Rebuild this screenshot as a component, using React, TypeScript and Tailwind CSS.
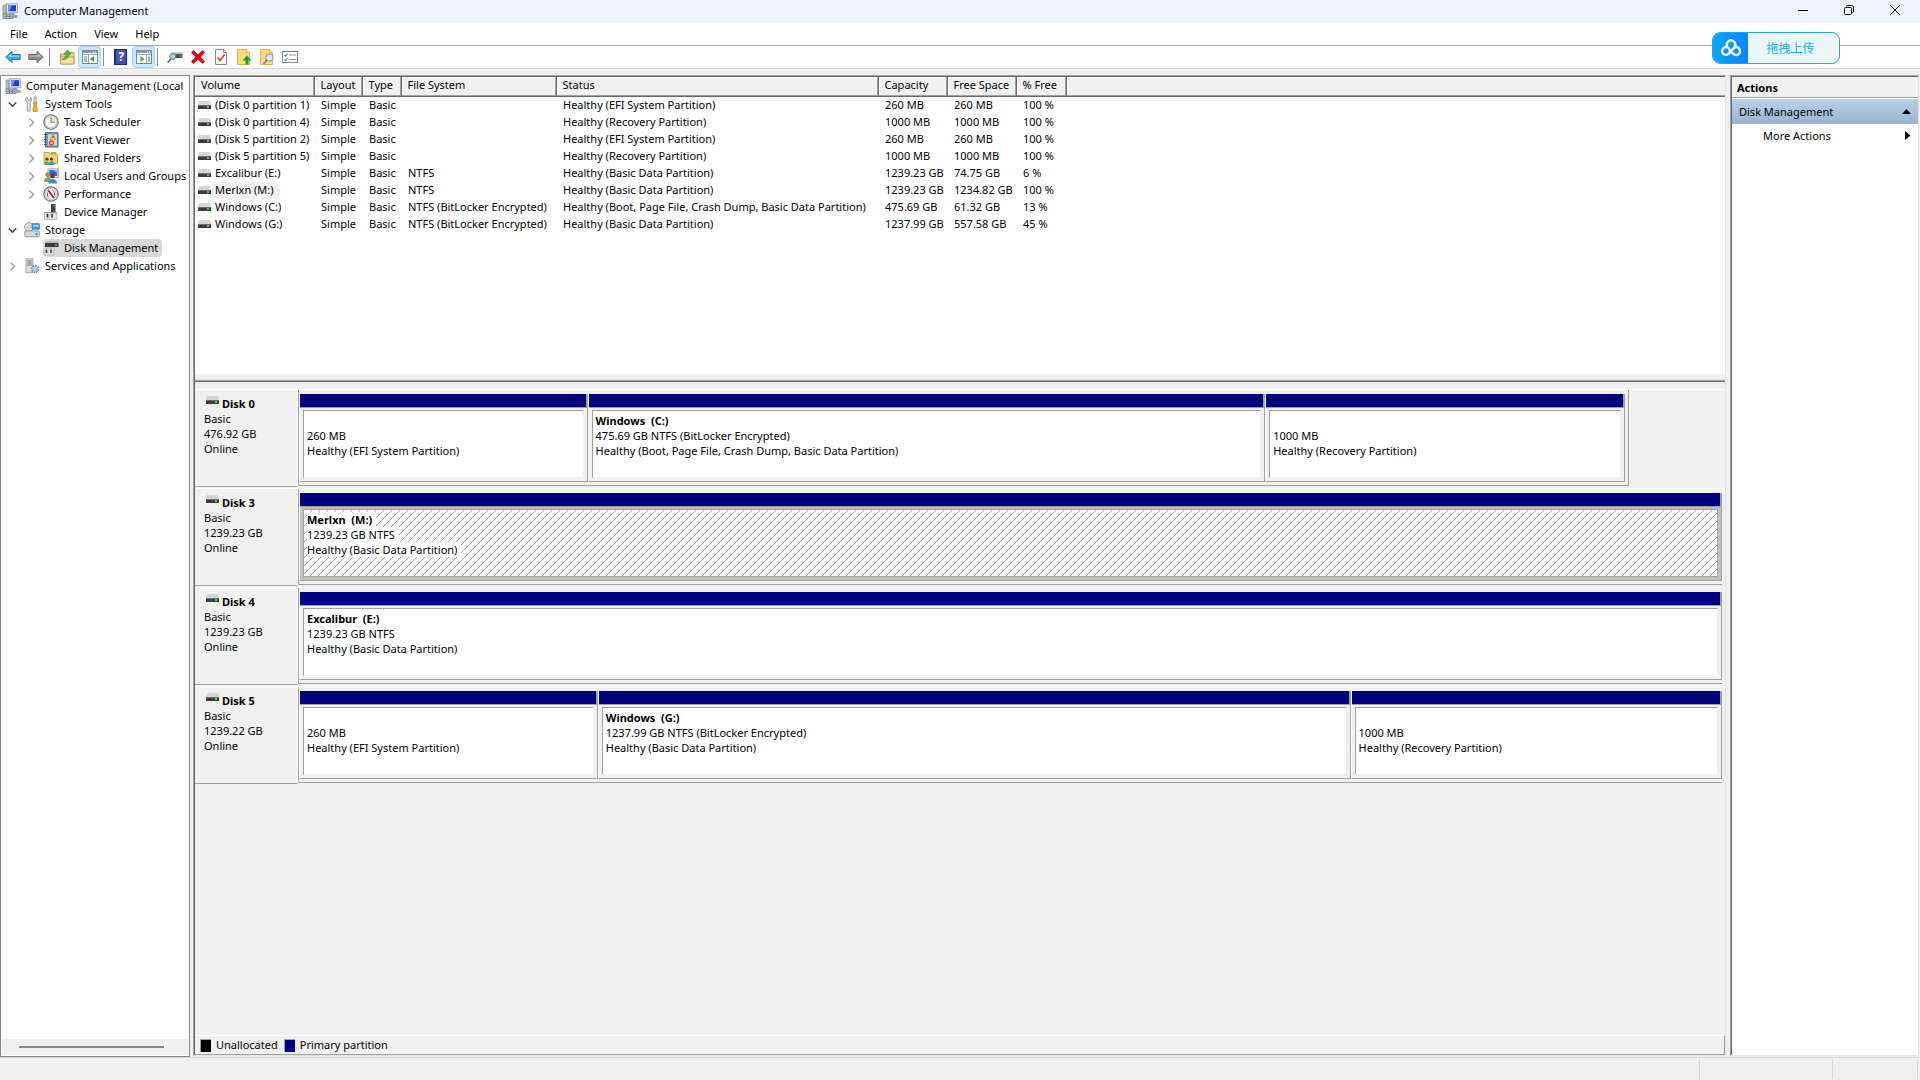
import type { ReactNode } from "react";

interface Volume {
  name: string;
  fileSystem: string;
  status: string;
  capacity: string;
  free: string;
  percent: string;
  selected?: boolean;
}

interface Partition {
  title?: string;
  size: string;
  status: string;
  weight: number;
  selected?: boolean;
}

interface Disk {
  name: string;
  size: string;
  // share of the row that the disk takes, in percent
  span: number;
  partitions: Partition[];
}

const volumes: Volume[] = [
  { name: "(Disk 0 partition 1)", fileSystem: "", status: "Healthy (EFI System Partition)", capacity: "260 MB", free: "260 MB", percent: "100 %" },
  { name: "(Disk 0 partition 4)", fileSystem: "", status: "Healthy (Recovery Partition)", capacity: "1000 MB", free: "1000 MB", percent: "100 %" },
  { name: "(Disk 5 partition 2)", fileSystem: "", status: "Healthy (EFI System Partition)", capacity: "260 MB", free: "260 MB", percent: "100 %" },
  { name: "(Disk 5 partition 5)", fileSystem: "", status: "Healthy (Recovery Partition)", capacity: "1000 MB", free: "1000 MB", percent: "100 %" },
  { name: "Excalibur (E:)", fileSystem: "NTFS", status: "Healthy (Basic Data Partition)", capacity: "1239.23 GB", free: "74.75 GB", percent: "6 %" },
  { name: "Merlxn (M:)", fileSystem: "NTFS", status: "Healthy (Basic Data Partition)", capacity: "1239.23 GB", free: "1234.82 GB", percent: "100 %", selected: true },
  { name: "Windows (C:)", fileSystem: "NTFS (BitLocker Encrypted)", status: "Healthy (Boot, Page File, Crash Dump, Basic Data Partition)", capacity: "475.69 GB", free: "61.32 GB", percent: "13 %" },
  { name: "Windows (G:)", fileSystem: "NTFS (BitLocker Encrypted)", status: "Healthy (Basic Data Partition)", capacity: "1237.99 GB", free: "557.58 GB", percent: "45 %" },
];

const disks: Disk[] = [
  {
    name: "Disk 0",
    size: "476.92 GB",
    span: 93.5,
    partitions: [
      { size: "260 MB", status: "Healthy (EFI System Partition)", weight: 288 },
      { title: "Windows  (C:)", size: "475.69 GB NTFS (BitLocker Encrypted)", status: "Healthy (Boot, Page File, Crash Dump, Basic Data Partition)", weight: 679 },
      { size: "1000 MB", status: "Healthy (Recovery Partition)", weight: 360 },
    ],
  },
  {
    name: "Disk 3",
    size: "1239.23 GB",
    span: 100,
    partitions: [{ title: "Merlxn  (M:)", size: "1239.23 GB NTFS", status: "Healthy (Basic Data Partition)", weight: 1, selected: true }],
  },
  {
    name: "Disk 4",
    size: "1239.23 GB",
    span: 100,
    partitions: [{ title: "Excalibur  (E:)", size: "1239.23 GB NTFS", status: "Healthy (Basic Data Partition)", weight: 1 }],
  },
  {
    name: "Disk 5",
    size: "1239.22 GB",
    span: 100,
    partitions: [
      { size: "260 MB", status: "Healthy (EFI System Partition)", weight: 298 },
      { title: "Windows  (G:)", size: "1237.99 GB NTFS (BitLocker Encrypted)", status: "Healthy (Basic Data Partition)", weight: 754 },
      { size: "1000 MB", status: "Healthy (Recovery Partition)", weight: 371 },
    ],
  },
];

/* ---------- icons ---------- */

function Svg({ children, size = 16 }: { children: ReactNode; size?: number }) {
  return (
    <svg width={size} height={size} viewBox="0 0 16 16" className="shrink-0" fill="none" aria-hidden="true">
      {children}
    </svg>
  );
}

function ComputerIcon() {
  return (
    <Svg>
      <path d="M1 2h3v9H1z" fill="#b9bfc6" stroke="#6f7a86" strokeWidth=".6" />
      <rect x="4.5" y=".8" width="11" height="9" fill="#e3e6ea" stroke="#8a929c" strokeWidth=".7" />
      <rect x="6" y="2.2" width="8" height="6" fill="#1c3fd0" />
      <path d="M6 2.2h4l-2.5 6H6z" fill="#6f93f2" />
      <path d="M8 10h4l1 2H7z" fill="#a9b0b8" />
      <path d="M1 11h10v4.5H1z" fill="#c5cad0" stroke="#5e6873" strokeWidth=".7" />
      <path d="M2 13.3h8M4.5 11.5v3.6M7.5 11.5v3.6" stroke="#5e6873" strokeWidth=".8" />
      <path d="M11 12h4.5v3H11z" fill="#9aa3ad" />
    </Svg>
  );
}

function ToolsIcon() {
  return (
    <Svg>
      <path d="M3 1.2C1.6 2 1.2 3.8 2 5.1l1.2 1v9h3v-9c1.5-.9 1.9-3.3.4-4.900v3H5L3.800 4z" fill="#dfe2e5" stroke="#7b8086" strokeWidth=".7" />
      <path d="M10 1h2.200v6H10z" fill="#d5d8dc" stroke="#7b8086" strokeWidth=".6" />
      <path d="M9 7h4.200l-.8 1.500v2.500l.8 1v3.500H9V12l.8-1V8.500z" fill="#f3b41b" stroke="#a8770b" strokeWidth=".6" />
    </Svg>
  );
}

function ClockIcon() {
  return (
    <Svg>
      <circle cx="8" cy="8" r="7.2" fill="#d3d6da" stroke="#73777c" strokeWidth="1.1" />
      <circle cx="8" cy="8" r="5.5" fill="#fdfdfb" stroke="#b3b7bc" strokeWidth=".6" />
      <path d="M8 8V2.500A5.500 5.500 0 0 1 13.500 8z" fill="#fbe3b4" />
      <path d="M8 3.500V8.300H12" stroke="#5a7fa8" strokeWidth="1.1" />
    </Svg>
  );
}

function EventIcon() {
  return (
    <Svg>
      <rect x="2.5" y=".8" width="12.5" height="14.2" fill="#7c9cc4" stroke="#43566e" strokeWidth=".9" />
      <rect x="5" y="2.2" width="9" height="11.5" fill="#c4d8ee" />
      <path d="M1 2.500h3M1 5h3M1 7.500h3M1 10h3M1 12.500h3" stroke="#4a5665" strokeWidth="1" />
      <path d="M10 2l3.200 5.500H6.800z" fill="#fbc62a" stroke="#a97a0a" strokeWidth=".5" />
      <path d="M10 4v2" stroke="#222" strokeWidth=".9" />
      <circle cx="8.500" cy="11" r="2.700" fill="#d9472f" />
      <path d="M7.400 9.900l2.200 2.200M9.600 9.900l-2.200 2.200" stroke="#fff" strokeWidth=".8" />
    </Svg>
  );
}

function SharedIcon() {
  return (
    <Svg>
      <path d="M1 2.500h5l1 1.500h7.500v9.500H1z" fill="#f6d375" stroke="#b98d2c" strokeWidth=".8" />
      <path d="M8 2h5v2H8z" fill="#7fc46e" />
      <circle cx="4" cy="9" r="1.600" fill="#4b3a28" />
      <circle cx="8.500" cy="9" r="1.600" fill="#4b3a28" />
      <path d="M1.300 15c0-5 5.400-5 5.400 0z" fill="#4fa978" />
      <path d="M6 15c0-5 5.400-5 5.400 0z" fill="#3b9cc0" />
    </Svg>
  );
}

function UsersIcon() {
  return (
    <Svg>
      <rect x="5" y=".8" width="10.500" height="8.700" fill="#dfe3e8" stroke="#8a929c" strokeWidth=".7" />
      <rect x="6.300" y="2" width="8" height="6" fill="#3562d8" />
      <path d="M10 2h4.300v3z" fill="#8fb0f5" />
      <circle cx="4.800" cy="6.500" r="2.500" fill="#b98a52" />
      <path d="M.8 14c0-6.500 8-6.500 8 0z" fill="#6fae53" />
      <circle cx="9.500" cy="8" r="2.400" fill="#5b4330" />
      <path d="M5.500 15.500c0-6 8.500-6 8.500 0z" fill="#4b83cc" />
    </Svg>
  );
}

function PerformanceIcon() {
  return (
    <Svg>
      <circle cx="8" cy="8" r="7.200" fill="#e6e8ea" stroke="#6d7176" strokeWidth="1.200" />
      <circle cx="8" cy="8" r="5.300" fill="#fff" stroke="#a9acb0" strokeWidth=".7" />
      <path d="M5 4l6 8" stroke="#d3141c" strokeWidth="1.900" />
      <path d="M9.500 4l2 2.500v3M4.500 6.500V10l1.500 1.500" stroke="#c8343a" strokeWidth=".9" />
    </Svg>
  );
}

function DeviceIcon() {
  return (
    <Svg>
      <rect x="8" y="0" width="4.500" height="8" fill="#3b3f44" />
      <rect x="10" y="1.200" width="1.300" height="1.300" fill="#3bd13b" />
      <path d="M1.500 8h12.500v1.500H1.500z" fill="#8f9397" />
      <path d="M1.500 9h12.500v6.500H1.500z" fill="#e1e2e4" stroke="#9a9da1" strokeWidth=".6" />
      <path d="M4.500 10v3.500M9 10v3.500" stroke="#333" strokeWidth="1.600" />
    </Svg>
  );
}

function StorageIcon() {
  return (
    <Svg>
      <circle cx="5" cy="5" r="4.500" fill="#d5dade" stroke="#8a9096" strokeWidth=".7" />
      <circle cx="5" cy="5" r="1.300" fill="#fff" stroke="#8a9096" strokeWidth=".5" />
      <rect x="8" y="1.500" width="7.500" height="6" rx=".8" fill="#3f9fdc" stroke="#1f6ba0" strokeWidth=".6" />
      <path d="M9 3h5.500v1.500H9z" fill="#b5e0f8" />
      <rect x=".8" y="9" width="14.500" height="5.800" rx="1" fill="#d7dadd" stroke="#7c8288" strokeWidth=".8" />
      <rect x="11.500" y="11" width="2" height="2.200" fill="#2fb52f" />
    </Svg>
  );
}

function DiskManagementIcon() {
  return (
    <Svg>
      <path d="M2 3l2-2h11l.5 2z" fill="#b7babd" />
      <path d="M2 3h13.500v4H2z" fill="#3a3d41" />
      <rect x="12" y="4.300" width="2" height="1.300" fill="#3bd13b" />
      <path d="M1 8h10v7H1z" fill="#e1e2e4" stroke="#9a9da1" strokeWidth=".6" />
      <path d="M3.500 9.500v3.500M8 9.500v3.500" stroke="#333" strokeWidth="1.500" />
    </Svg>
  );
}

function ServicesIcon() {
  return (
    <Svg>
      <path d="M2 .8h7v14H2z" fill="#dde0e3" stroke="#80868c" strokeWidth=".7" />
      <path d="M3.200 3h4.600M3.200 5h4.600M3.200 7h4.600" stroke="#5d6369" strokeWidth=".9" />
      <circle cx="11" cy="11" r="3.300" fill="#c7dcee" stroke="#5d86ab" strokeWidth="1.700" strokeDasharray="1.600 .9" />
      <circle cx="11" cy="11" r="1.300" fill="#fff" stroke="#5d86ab" strokeWidth=".6" />
    </Svg>
  );
}

function DriveIcon() {
  return (
    <svg width="13" height="8" viewBox="0 0 13 8" className="shrink-0" aria-hidden="true">
      <path d="M1 0h11l1 4H0z" fill="#d3d6d9" />
      <rect y="4" width="13" height="4" fill="#3a3d40" />
      <rect y="4" width="13" height="1" fill="#6b6f73" />
      <rect x="9" y="5" width="2" height="2" fill="#35e035" />
    </svg>
  );
}

function BackIcon() {
  return (
    <Svg>
      <path d="M.8 8L7 2.300v3.200h8.200v5H7v3.200z" fill="#35a8ec" stroke="#1c6cae" strokeWidth=".9" strokeLinejoin="round" />
      <path d="M2.500 7.700L6.300 4.200v2.300h8v1.200z" fill="#93d6fa" />
    </Svg>
  );
}

function ForwardIcon() {
  return (
    <Svg>
      <path d="M15.200 8L9 2.300v3.200H.8v5H9v3.200z" fill="#8c8f92" stroke="#5d6063" strokeWidth=".9" strokeLinejoin="round" />
      <path d="M13.500 7.700L9.700 4.200v2.300h-8v1.200z" fill="#b9bbbd" />
    </Svg>
  );
}

function UpFolderIcon() {
  return (
    <Svg>
      <path d="M1.500 5h6l1-1.500h6.500V15H1.500z" fill="#f0cd7c" stroke="#ab8536" strokeWidth=".8" />
      <path d="M1.500 8h13.500v7H1.500z" fill="#f7dea0" stroke="#ab8536" strokeWidth=".6" />
      <path d="M3 10.500c3-1 4-3 4-5.500H5L8.500.8 12 5H9.800c0 4-2.700 6-6.800 5.500z" fill="#4fc13a" stroke="#2b8420" strokeWidth=".6" />
    </Svg>
  );
}

function ConsoleIcon({ flip }: { flip?: boolean }) {
  return (
    <Svg>
      <rect x=".5" y="1.500" width="15" height="13" fill="#fff" stroke="#7f878f" />
      <path d="M1 2h14v2H1z" fill="#8e979f" />
      <path d="M11 3h1M13 3h1" stroke="#fff" />
      <path d="M1 5.500h14" stroke="#9aa2aa" />
      {flip ? (
        <>
          <path d="M10.500 6v8" stroke="#9aa2aa" />
          <path d="M12 8h2M12 10h2M12 12h2" stroke="#3f77b5" />
          <path d="M4.500 7l4 3-4 3z" fill="#3cae2c" />
        </>
      ) : (
        <>
          <path d="M6.500 6v8" stroke="#9aa2aa" />
          <path d="M2 8h3M2 10h3M2 12h3" stroke="#3f77b5" />
          <path d="M12 7l-4 3 4 3z" fill="#3cae2c" />
        </>
      )}
    </Svg>
  );
}

function HelpIcon() {
  return (
    <span className="flex h-4 w-[13px] items-center justify-center border border-l-2 border-[#1b2b72] bg-[#3c55c0] text-[12px] leading-4 font-bold text-white">
      ?
    </span>
  );
}

function ConnectIcon() {
  return (
    <Svg>
      <path d="M4 3h11.500v2H4z" fill="#c3c6c9" />
      <path d="M4 5h11.500v4H4z" fill="#4a4e52" />
      <rect x="12.500" y="6.200" width="2" height="1.600" fill="#35d035" />
      <circle cx="5.800" cy="7.500" r="3" fill="#b9cbd9" stroke="#63707b" strokeWidth=".9" />
      <path d="M3.800 10L.8 13.500" stroke="#5e6a75" strokeWidth="1.700" />
    </Svg>
  );
}

function DeleteIcon() {
  return (
    <Svg>
      <path d="M3.500 1L8 5.500 12.500 1 15 3.500 10.700 8l4.300 4.500-2.500 2.500L8 10.500 3.500 15 1 12.500 5.300 8 1 3.500z" fill="#dc0a14" />
    </Svg>
  );
}

function CheckPageIcon() {
  return (
    <Svg>
      <path d="M2.500.5h8L13.500 3.500v12h-11z" fill="#fff" stroke="#86898c" />
      <path d="M10.500.5v3h3" stroke="#86898c" />
      <path d="M4.500 8.500l2.500 3 4.500-6" stroke="#e8471c" strokeWidth="1.800" />
    </Svg>
  );
}

function UploadPageIcon() {
  return (
    <Svg>
      <path d="M1.500.5h9l3 3v12h-12z" fill="#fbdc7c" stroke="#dcb440" />
      <path d="M10.500.5v3h3" fill="#fff3cc" stroke="#dcb440" />
      <path d="M11 6.500l4.500 5H12.500v4h-3v-4H6.500z" fill="#1e9e28" />
    </Svg>
  );
}

function SearchPageIcon() {
  return (
    <Svg>
      <path d="M1.500.5h9l3 3v12h-12z" fill="#fbdc7c" stroke="#dcb440" />
      <path d="M10.500.5v3h3" fill="#fff3cc" stroke="#dcb440" />
      <circle cx="10.500" cy="8.500" r="3.500" fill="#dcecf7" stroke="#8496a5" strokeWidth="1.100" />
      <path d="M8 11.200L4.500 15" stroke="#7a8a97" strokeWidth="1.700" />
    </Svg>
  );
}

function ListIcon() {
  return (
    <Svg>
      <rect x=".5" y="2.500" width="15" height="11" fill="#fff" stroke="#7f878f" />
      <path d="M0 2.500h16" stroke="#6d757d" />
      <path d="M2.500 6l1 1.200L5.500 4.500M2.500 10.500l1 1.200L5.500 9" stroke="#2b82c9" strokeWidth="1.100" />
      <path d="M7 6h7M7 10.500h7" stroke="#8e979f" />
    </Svg>
  );
}

function CloudIcon() {
  return (
    <svg width="22" height="18" viewBox="0 0 22 18" fill="none" stroke="#fff" strokeWidth="2.400" aria-hidden="true">
      <path d="M7.600 8.200a4.200 4.200 0 1 1 6.800 0" />
      <circle cx="6" cy="12" r="3.900" />
      <path d="M8.500 15l5-5.600a3.900 3.900 0 1 1 .2 5.800L11 12.300" />
    </svg>
  );
}

/* ---------- window chrome ---------- */

function TitleBar() {
  return (
    <header className="flex h-[23px] items-center bg-[#eff3fb] pr-[2px] pb-px pl-[2px]">
      <ComputerIcon />
      <h1 className="ml-[6px] flex-1 pb-px">Computer Management</h1>
      <button aria-label="Minimize" className="flex h-full w-[46px] items-center justify-center pb-[2px]">
        <svg width="10" height="10" stroke="#000"><path d="M0 5.500h10" /></svg>
      </button>
      <button aria-label="Restore" className="flex h-full w-[46px] items-center justify-center pb-[2px]">
        <svg width="10" height="10" fill="none" stroke="#000">
          <rect x=".5" y="2.500" width="7" height="7" rx="1" />
          <path d="M2.500 2V1.500a1 1 0 0 1 1-1h4a2 2 0 0 1 2 2v4a1 1 0 0 1-1 1H8" />
        </svg>
      </button>
      <button aria-label="Close" className="flex h-full w-[46px] items-center justify-center pb-[2px]">
        <svg width="10" height="10" stroke="#000"><path d="M0 0l10 10M10 0L0 10" /></svg>
      </button>
    </header>
  );
}

function MenuBar() {
  return (
    <nav className="flex h-[23px] items-center gap-px border-b border-[#a9a9b0] bg-white pb-[2px] pl-[2px]">
      {["File", "Action", "View", "Help"].map((item) => (
        <button key={item} className="px-2">{item}</button>
      ))}
    </nav>
  );
}

function ToolButton({ label, active, children }: { label: string; active?: boolean; children: ReactNode }) {
  return (
    <button
      aria-label={label}
      className={`flex h-[22px] w-[23px] items-center justify-center ${active ? "rounded-sm border border-[#99d1ff] bg-[#cce8ff]" : ""}`}
    >
      {children}
    </button>
  );
}

function ToolSeparator() {
  return <span className="mr-[5px] ml-[2px] h-[18px] w-px bg-[#8a8a8a]" />;
}

function ToolBar() {
  return (
    <div className="flex h-[23px] items-center border-b border-[#d7d7d7] bg-white pl-px">
      <ToolButton label="Back"><BackIcon /></ToolButton>
      <ToolButton label="Forward"><ForwardIcon /></ToolButton>
      <ToolSeparator />
      <ToolButton label="Up one level"><UpFolderIcon /></ToolButton>
      <ToolButton label="Show console tree" active><ConsoleIcon /></ToolButton>
      <ToolSeparator />
      <ToolButton label="Help topics"><HelpIcon /></ToolButton>
      <ToolButton label="Show action pane" active><ConsoleIcon flip /></ToolButton>
      <ToolSeparator />
      <ToolButton label="Rescan disks"><ConnectIcon /></ToolButton>
      <ToolButton label="Delete"><DeleteIcon /></ToolButton>
      <ToolButton label="Properties"><CheckPageIcon /></ToolButton>
      <ToolButton label="Open"><UploadPageIcon /></ToolButton>
      <ToolButton label="Explore"><SearchPageIcon /></ToolButton>
      <ToolButton label="Settings"><ListIcon /></ToolButton>
    </div>
  );
}

/* ---------- console tree ---------- */

const tree: { label: string; level: 0 | 1 | 2; state?: "open" | "closed"; icon: ReactNode; selected?: boolean }[] = [
  { label: "Computer Management (Local", level: 0, icon: <ComputerIcon /> },
  { label: "System Tools", level: 1, state: "open", icon: <ToolsIcon /> },
  { label: "Task Scheduler", level: 2, state: "closed", icon: <ClockIcon /> },
  { label: "Event Viewer", level: 2, state: "closed", icon: <EventIcon /> },
  { label: "Shared Folders", level: 2, state: "closed", icon: <SharedIcon /> },
  { label: "Local Users and Groups", level: 2, state: "closed", icon: <UsersIcon /> },
  { label: "Performance", level: 2, state: "closed", icon: <PerformanceIcon /> },
  { label: "Device Manager", level: 2, icon: <DeviceIcon /> },
  { label: "Storage", level: 1, state: "open", icon: <StorageIcon /> },
  { label: "Disk Management", level: 2, icon: <DiskManagementIcon />, selected: true },
  { label: "Services and Applications", level: 1, state: "closed", icon: <ServicesIcon /> },
];

const indents = ["pl-[3px]", "pl-[3px]", "pl-[22px]"];

function ConsoleTree() {
  return (
    <aside className="flex w-[190px] shrink-0 flex-col overflow-hidden border border-[#828790] bg-white p-px">
      <ul className="flex-1">
        {tree.map((node) => (
          <li key={node.label} className={`flex h-[18px] items-center whitespace-nowrap ${indents[node.level]}`}>
            {node.level > 0 && (
              <span className="flex w-[19px] shrink-0 pl-[3px]">
                {node.state && (
                  <svg width="9" height="9" viewBox="0 0 9 9" fill="none" strokeWidth="1.500" aria-hidden="true">
                    {node.state === "open" ? <path d="M.8 2.500l3.700 3.700 3.700-3.700" stroke="#404040" /> : <path d="M2.500.5l4 4-4 4" stroke="#a0a0a0" />}
                  </svg>
                )}
              </span>
            )}
            <span className={`flex h-full items-center gap-[5px] rounded-sm pr-1 ${node.selected ? "bg-[#d9d9d9]" : ""}`}>
              {node.icon}
              <span className="pb-[2px]">{node.label}</span>
            </span>
          </li>
        ))}
      </ul>
      <div className="flex h-4 items-center bg-[#f0f0f0] pr-6 pl-[17px]">
        <div className="h-[2px] flex-1 bg-[#868686]" />
      </div>
    </aside>
  );
}

/* ---------- volume list ---------- */

const columns = [
  { title: "Volume", width: "w-[119px]" },
  { title: "Layout", width: "w-[48px]" },
  { title: "Type", width: "w-[39px]" },
  { title: "File System", width: "w-[155px]" },
  { title: "Status", width: "w-[322px]" },
  { title: "Capacity", width: "w-[69px]" },
  { title: "Free Space", width: "w-[69px]" },
  { title: "% Free", width: "w-[50px]" },
];

function VolumeList() {
  return (
    <div className="h-[297px] shrink-0 overflow-hidden bg-white">
      <table className="w-full table-fixed border-collapse whitespace-nowrap">
        <thead>
          <tr className="h-[19px] bg-[#f0f0f0]">
            {columns.map((col) => (
              <th key={col.title} className={`${col.width} border-r border-b border-[#696969] p-0 text-left align-top font-normal shadow-[inset_-1px_-1px_#a0a0a0,inset_1px_1px_#ffffff]`}>
                <span className="pl-[6px]">{col.title}</span>
              </th>
            ))}
            <th aria-label="Empty" className="border-b border-[#696969] p-0 shadow-[inset_0_-1px_#a0a0a0,inset_1px_1px_#ffffff]" />
          </tr>
        </thead>
        <tbody>
          {volumes.map((v) => (
            <tr key={v.name} className="h-[17px] align-top">
              <td className="p-0">
                <div className="flex h-[17px] items-center pl-[3px]">
                  <DriveIcon />
                  <span className={`ml-px h-full px-[3px] ${v.selected ? "bg-[#f0f0f0] pr-[6px]" : ""}`}>{v.name}</span>
                </div>
              </td>
              {["Simple", "Basic", v.fileSystem, v.status, v.capacity, v.free, v.percent].map((text, i) => (
                <td key={i} className="p-0 pl-[7px]">{text}</td>
              ))}
              <td />
            </tr>
          ))}
        </tbody>
      </table>
    </div>
  );
}

/* ---------- disk graph ---------- */

function Hatch() {
  return (
    <svg className="absolute inset-0 h-full w-full" shapeRendering="crispEdges" aria-hidden="true">
      <defs>
        <pattern id="hatch" width="8" height="8" patternUnits="userSpaceOnUse">
          {[0, 1, 2, 3, 4, 5, 6, 7].map((n) => (
            <rect key={n} x={7 - n} y={n} width="1" height="1" fill="#a0a0a0" />
          ))}
        </pattern>
      </defs>
      <rect width="100%" height="100%" fill="url(#hatch)" />
    </svg>
  );
}

function PartitionBox({ part }: { part: Partition }) {
  return (
    <div
      className="flex min-w-0 flex-col border-r border-b border-l border-r-[#a0a0a0] border-b-[#a0a0a0] border-l-white"
      style={{ flexGrow: part.weight, flexBasis: 0 }}
    >
      <div className="h-[13px] border-r border-[#a0a0a0] bg-[#000080]" />
      <div className={`flex-1 border-t border-[#a0a0a0] px-[3px] pt-[2px] pb-[3px] ${part.selected ? "bg-[#c0c0c0]" : ""}`}>
        <div
          className={`relative h-full border bg-white pt-[2px] pl-[3px] leading-[15px] whitespace-pre ${
            part.selected ? "border-[#a0a0a0]" : "border-t-[#a0a0a0] border-r-[#f0f0f0] border-b-[#f0f0f0] border-l-[#a0a0a0]"
          }`}
        >
          {part.selected && <Hatch />}
          <p className="relative h-[15px] w-fit bg-white pr-1 font-bold">{part.title}</p>
          <p className="relative w-fit bg-white pr-1">{part.size}</p>
          <p className="relative w-fit bg-white pr-1">{part.status}</p>
        </div>
      </div>
    </div>
  );
}

function DiskRow({ disk }: { disk: Disk }) {
  return (
    <section className="flex h-[99px] pb-px">
      <div className="w-[103px] shrink-0 border-t border-r border-b border-t-white border-r-white border-b-[#a0a0a0] pt-[6px] pl-[9px] leading-[15px]">
        <h2 className="flex items-start gap-[3px] pl-[2px] font-bold">
          <DriveIcon />
          {disk.name}
        </h2>
        <p>Basic</p>
        <p>{disk.size}</p>
        <p>Online</p>
      </div>
      <div className="flex-1 border-t border-white pr-[3px]">
        <div
          className={`flex h-[96px] border-b border-l border-[#a0a0a0] pt-[4px] pb-[3px] ${disk.span < 100 ? "border-r pr-[3px]" : ""}`}
          style={{ width: `${disk.span}%` }}
        >
          {disk.partitions.map((part, i) => (
            <PartitionBox key={i} part={part} />
          ))}
        </div>
      </div>
    </section>
  );
}

function DiskGraph() {
  return (
    <div className="flex min-h-0 flex-1 flex-col">
      <div className="min-h-0 flex-1 overflow-hidden pt-[7px]">
        {disks.map((disk) => (
          <DiskRow key={disk.name} disk={disk} />
        ))}
      </div>
      <footer className="flex h-5 items-center border-t border-r border-b border-t-white border-r-[#a0a0a0] border-b-[#a0a0a0] pl-[5px]">
        <span className="h-[13px] w-[11px] border-t border-l border-[#a0a0a0] bg-black" />
        <span className="mr-[6px] ml-[5px] pb-[2px]">Unallocated</span>
        <span className="h-[13px] w-[11px] border-t border-l border-[#a0a0a0] bg-[#000080]" />
        <span className="ml-[5px] pb-[2px]">Primary partition</span>
      </footer>
    </div>
  );
}

/* ---------- actions ---------- */

function ActionsPane() {
  return (
    <aside className="mr-px mb-px flex w-[189px] shrink-0 flex-col border border-t-[#a0a0a0] border-r-[#e3e3e3] border-b-[#e3e3e3] border-l-[#a0a0a0]">
      <div className="flex-1 border-t border-l border-[#696969] bg-white">
        <h2 className="h-[21px] border-b border-[#a0a0a0] bg-[#f0f0f0] pl-[5px] leading-[21px] font-bold">Actions</h2>
        <button className="mt-px flex h-[25px] w-full items-center justify-between bg-linear-to-b from-[#b9d1ea] to-[#99b4d1] pr-[7px] pl-[7px]">
          Disk Management
          <svg width="9" height="5"><path d="M4.500 0L9 5H0z" /></svg>
        </button>
        <button className="flex h-[22px] w-full items-center justify-between pr-[7px] pl-[31px]">
          More Actions
          <svg width="6" height="9"><path d="M0 0l5.500 4.500L0 9z" /></svg>
        </button>
      </div>
    </aside>
  );
}

function StatusBar() {
  return (
    <footer className="flex h-[23px] shrink-0 border-t border-[#d7d7d7] pt-px pr-[2px] pb-px">
      <div className="flex-1 border-r border-[#d7d7d7]" />
      <div className="w-[133px] border-r border-[#d7d7d7]" />
      <div className="w-[85px] border-r border-[#d7d7d7]" />
    </footer>
  );
}

export default function App() {
  return (
    <div className="relative flex h-screen flex-col bg-[#f0f0f0] font-['Noto_Sans','Noto_Sans_CJK_SC',sans-serif] text-[11px] leading-[15px] text-black">
      <TitleBar />
      <MenuBar />
      <ToolBar />
      <div className="flex min-h-0 flex-1 pt-[6px]">
        <ConsoleTree />
        <main className="mr-1 mb-px ml-[3px] flex min-w-0 flex-1 flex-col border border-t-[#a0a0a0] border-r-[#e3e3e3] border-b-[#e3e3e3] border-l-[#a0a0a0]">
          <div className="flex min-h-0 flex-1 flex-col border-t border-l border-[#696969]">
            <VolumeList />
            <div className="h-[8px] shrink-0 border-b border-[#696969] shadow-[inset_0_-1px_#a0a0a0,inset_0_-2px_#e3e3e3]" />
            <DiskGraph />
          </div>
        </main>
        <ActionsPane />
      </div>
      <StatusBar />
      <button className="absolute top-8 right-20 flex h-8 w-32 items-center overflow-hidden rounded-lg border border-[#1ba5f5] bg-[#eaf7ff] text-[12px] text-[#1ba5f5]">
        <span className="flex h-full w-[35px] items-center justify-center bg-linear-to-r from-[#0aa5ff] to-[#0a86ff]">
          <CloudIcon />
        </span>
        <span className="flex-1 pr-[6px] text-center">拖拽上传</span>
      </button>
    </div>
  );
}
